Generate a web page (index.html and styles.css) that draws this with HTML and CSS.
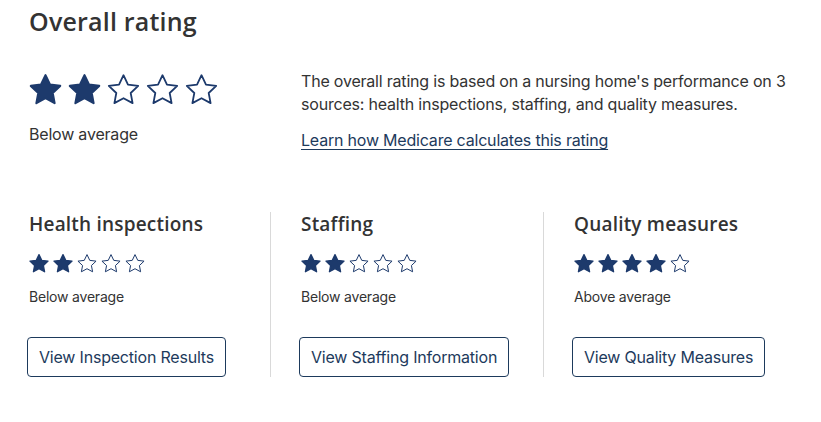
FILE: index.html
```html
<!DOCTYPE html>
<html lang="en">
<head>
<meta charset="utf-8">
<title>Overall rating</title>
<link rel="stylesheet" href="styles.css">
</head>
<body>
<svg width="0" height="0" class="defs" aria-hidden="true">
  <defs>
    <path id="star" d="M12 2.6l2.75 5.75 6.3.8-4.62 4.38 1.17 6.25L12 16.73l-5.6 3.05 1.17-6.25L2.95 9.150l6.3-.8z"/>
  </defs>
</svg>
<main class="page">
  <h1 class="title">Overall rating</h1>
  <section class="overall">
    <div class="overall-left">
      <div class="stars stars-lg">
        <svg class="star full" viewBox="0 0 24 24"><use href="#star"/></svg>
        <svg class="star full" viewBox="0 0 24 24"><use href="#star"/></svg>
        <svg class="star empty" viewBox="0 0 24 24"><use href="#star"/></svg>
        <svg class="star empty" viewBox="0 0 24 24"><use href="#star"/></svg>
        <svg class="star empty" viewBox="0 0 24 24"><use href="#star"/></svg>
      </div>
      <p class="label label-lg">Below average</p>
    </div>
    <div class="overall-right">
      <p class="desc">The overall rating is based on a nursing home's performance on 3 sources: health inspections, staffing, and quality measures.</p>
      <a class="learn" href="#">Learn how Medicare calculates this rating</a>
    </div>
  </section>
  <section class="cols">
    <div class="col">
      <h2 class="col-title">Health inspections</h2>
      <div class="stars stars-sm">
        <svg class="star full" viewBox="0 0 24 24"><use href="#star"/></svg>
        <svg class="star full" viewBox="0 0 24 24"><use href="#star"/></svg>
        <svg class="star empty" viewBox="0 0 24 24"><use href="#star"/></svg>
        <svg class="star empty" viewBox="0 0 24 24"><use href="#star"/></svg>
        <svg class="star empty" viewBox="0 0 24 24"><use href="#star"/></svg>
      </div>
      <p class="label">Below average</p>
      <a class="btn" href="#">View Inspection Results</a>
    </div>
    <div class="col col-div">
      <h2 class="col-title">Staffing</h2>
      <div class="stars stars-sm">
        <svg class="star full" viewBox="0 0 24 24"><use href="#star"/></svg>
        <svg class="star full" viewBox="0 0 24 24"><use href="#star"/></svg>
        <svg class="star empty" viewBox="0 0 24 24"><use href="#star"/></svg>
        <svg class="star empty" viewBox="0 0 24 24"><use href="#star"/></svg>
        <svg class="star empty" viewBox="0 0 24 24"><use href="#star"/></svg>
      </div>
      <p class="label">Below average</p>
      <a class="btn" href="#">View Staffing Information</a>
    </div>
    <div class="col col-div">
      <h2 class="col-title">Quality measures</h2>
      <div class="stars stars-sm">
        <svg class="star full" viewBox="0 0 24 24"><use href="#star"/></svg>
        <svg class="star full" viewBox="0 0 24 24"><use href="#star"/></svg>
        <svg class="star full" viewBox="0 0 24 24"><use href="#star"/></svg>
        <svg class="star full" viewBox="0 0 24 24"><use href="#star"/></svg>
        <svg class="star empty" viewBox="0 0 24 24"><use href="#star"/></svg>
      </div>
      <p class="label">Above average</p>
      <a class="btn" href="#">View Quality Measures</a>
    </div>
  </section>
</main>
</body>
</html>
```
FILE: styles.css
```css
html, body {
  margin: 0;
  padding: 0;
  background: #fff;
}
body {
  font-family: "Inter", "Roboto", "Liberation Sans", sans-serif;
  color: #333;
  letter-spacing: -0.2px;
}
.defs {
  position: absolute;
  width: 0;
  height: 0;
}
.page {
  padding: 6px 0 0 29px;
}
.title {
  font-family: "Open Sans", "Liberation Sans", sans-serif;
  font-weight: 600;
  font-size: 25px;
  letter-spacing: 0.2px;
  line-height: 30px;
  margin: 0;
  color: #333;
}
.overall {
  display: flex;
  margin-top: 35px;
}
.overall-left {
  width: 272px;
  flex: none;
}
.stars {
  display: flex;
}
.star {
  display: block;
  flex: none;
  stroke: #1d3a6c;
  stroke-linejoin: round;
}
.star.full {
  fill: #1d3a6c;
  stroke-width: 1.3;
}
.star.empty {
  fill: #fff;
  stroke-width: 1.1;
}
.stars-lg {
  margin-left: -3px;
}
.stars-lg .star {
  width: 39px;
  height: 39px;
}
.stars-sm {
  margin-top: 16px;
  margin-left: -2px;
}
.stars-sm .star {
  width: 24px;
  height: 24px;
}
.stars-sm .star.empty {
  stroke-width: 1;
}
.label {
  margin: 0;
  font-size: 14px;
  line-height: 20px;
  margin-top: 11px;
}
.label-lg {
  font-size: 16px;
  margin-top: 14px;
}
.overall-right {
  width: 500px;
}
.desc {
  margin: 0;
  font-size: 16px;
  line-height: 23px;
  margin-top: -1px;
}
.learn {
  display: inline-block;
  margin-top: 14px;
  font-size: 16px;
  color: #1d3a5c;
  text-decoration: underline;
  text-underline-offset: 3px;
}
.cols {
  display: grid;
  grid-template-columns: 241px 273px 273px;
  margin-top: 62px;
}
.col {
  display: flex;
  flex-direction: column;
  align-items: flex-start;
}
.col-div {
  border-left: 1px solid #d9d9d9;
  padding-left: 30px;
}
.col-title {
  font-family: "Open Sans", "Liberation Sans", sans-serif;
  font-weight: 600;
  font-size: 19px;
  letter-spacing: 0.2px;
  line-height: 24px;
  margin: 0;
  color: #333;
}
.btn {
  margin-top: 30px;
  margin-left: -2px;
  display: inline-flex;
  align-items: center;
  height: 40px;
  box-sizing: border-box;
  padding: 0 11px;
  border: 1px solid #1d3a5c;
  border-radius: 4px;
  font-size: 16px;
  color: #1d3a5c;
  text-decoration: none;
}
```
